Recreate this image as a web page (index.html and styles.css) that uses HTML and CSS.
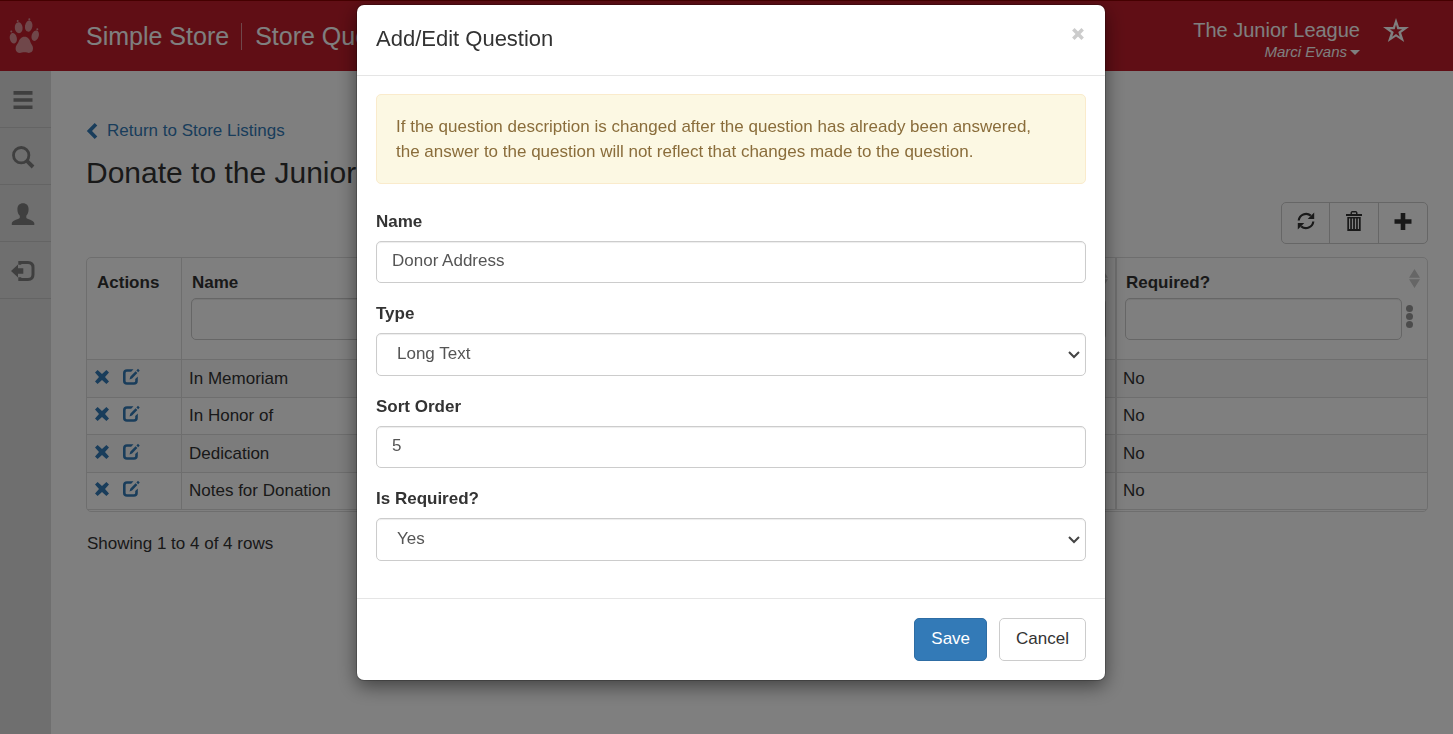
FILE: index.html
```
<!DOCTYPE html>
<html lang="en">
<head>
<meta charset="utf-8">
<title>Store Questions</title>
<link rel="stylesheet" href="styles.css">
</head>
<body>
<svg class="defs" aria-hidden="true">
  <symbol id="i-remove" viewBox="0 0 16 16"><path d="M1 3.600 3.600 1 8 5.100 12.400 1 15 3.600 11 8l4 4.400-2.600 2.600L8 10.900 3.600 15 1 12.400 5 8z"/></symbol>
  <symbol id="i-edit" viewBox="0 0 18 18"><path d="M11.500 1.200H5Q1 1.200 1 5v8q0 3.800 4 3.800h7q3.800 0 3.800-3.800V8.500L13.200 11v2q0 1.300-1.300 1.300H5Q3.600 14.300 3.600 13V5.200q0-1.400 1.400-1.400h4.200z"/><path d="M7.500 11.500 8.400 8.600 13.600 3.200 15.400 5 10.100 10.400zM14.400 2.400 16 .8 17.700 2.600 16.200 4.200z"/></symbol>
  <symbol id="i-sort" viewBox="0 0 11 19"><path d="M5.500 0 11 8.700H0zM5.500 19 11 10.200H0z"/></symbol>
</svg>

<header class="topbar">
  <a class="brand" href="#" aria-label="Home">
    <svg class="paw" viewBox="0 0 30 36" aria-hidden="true">
      <ellipse cx="9.700" cy="9.800" rx="3.900" ry="5.500" transform="rotate(-4 9.700 9.800)"/>
      <ellipse cx="19.700" cy="8.100" rx="3.700" ry="5.600" transform="rotate(10 19.700 8.100)"/>
      <ellipse cx="4.300" cy="20.300" rx="3.500" ry="5.300" transform="rotate(-12 4.300 20.300)"/>
      <ellipse cx="26.200" cy="17.700" rx="3.500" ry="5.400" transform="rotate(18 26.200 17.700)"/>
      <circle cx="8.700" cy="3" r="1"/><circle cx="20.300" cy="1.200" r="1"/><circle cx="2.300" cy="13.600" r="1"/><circle cx="28.300" cy="11.300" r="1"/>
      <path d="M15.500 18.800c3.500 0 5.200 2.700 5.900 5.200.6 2.200 2.800 3.400 2.600 6.800-.2 3.800-3.600 4.600-5.800 3.800-1.800-.6-3.600-.6-5.300 0-2.600.9-6.100.1-6.300-3.600-.2-3.200 2-4.800 2.900-7 1-2.500 2.600-5.200 6-5.200z"/>
    </svg>
  </a>
  <div class="crumbs"><span>Simple Store</span><span class="crumb-page">Store Questions</span></div>
  <div class="account">
    <span class="org">The Junior League</span>
    <button type="button" class="user">Marci Evans<span class="caret"></span></button>
  </div>
  <button type="button" class="star" aria-label="Favorite">
    <svg viewBox="0 0 26 24" aria-hidden="true"><path fill-rule="evenodd" d="M13 0 16 9H26L18.100 14.800 21.200 24 13 18.400 4.800 24 7.900 14.800 0 9H10zM13 6.500 11.700 11.200H6.900L10.700 14 9.200 18.700 13 15.900 16.800 18.700 15.300 14 19.100 11.200H14.300z"/></svg>
  </button>
</header>

<div class="shell">
  <nav class="sidebar" aria-label="Main">
    <a href="#" aria-label="Menu"><svg viewBox="0 0 24 24"><path d="M2.500 3h19v3.700h-19zM2.500 10.200h19v3.600h-19zM2.500 17.400h19V21h-19z"/></svg></a>
    <a href="#" aria-label="Search"><svg viewBox="0 0 24 24"><circle cx="10.200" cy="10.200" r="7.700" fill="none" stroke="currentColor" stroke-width="2.800"/><path d="M14.600 17.200 17.200 14.600 23.400 20.600 20.700 23.400z"/></svg></a>
    <a href="#" aria-label="Profile"><svg viewBox="0 0 24 24"><path d="M12 1.200c3.600 0 5.600 2.300 5.600 6 0 2.900-.8 5-2.300 6.500v2c0 1 7.800 2.800 8 5.300v2H.8v-2c.2-2.500 8-4.300 8-5.300v-2C7.200 12.200 6.400 10.100 6.400 7.200c0-3.700 2-6 5.600-6z"/></svg></a>
    <a href="#" aria-label="Log out"><svg viewBox="0 0 24 24"><path d="M0 12 7 5.500V9.200h5.300v5.600H7v3.700z"/><path d="M8.800 5.800V3.500h8.200q5 0 5 5v7q0 5-5 5H8.800V18.200" fill="none" stroke="currentColor" stroke-width="3"/></svg></a>
  </nav>

  <main class="content">
    <a class="back" href="#"><svg viewBox="0 0 12 16" aria-hidden="true"><path d="M8.700 0 11.300 2.600 6 8l5.300 5.400L8.700 16 .8 8z"/></svg>Return to Store Listings</a>
    <h1>Donate to the Junior League</h1>

    <div class="toolbar">
      <button type="button" aria-label="Refresh"><svg viewBox="0 0 20 20"><path d="M2.700 9.500A7.400 7.400 0 0 1 14.800 4.600M17.300 10.500A7.400 7.400 0 0 1 5.200 15.400" fill="none" stroke="currentColor" stroke-width="2.200"/><path d="M18.200 1.500v6.500h-6.500zM1.800 18.500v-6.500h6.500z"/></svg></button>
      <button type="button" aria-label="Delete"><svg viewBox="0 0 20 20"><path d="M6.500 3V1.500L7.800 0h4.400l1.300 1.500V3H18v2H2V3zM8 3h4V1.600H8z" fill-rule="evenodd"/><path d="M3.300 6h13.400v14H3.300zM5 7.500V18h1.200V7.500zM7.900 7.500V18h1.200V7.500zM10.900 7.500V18h1.200V7.500zM13.800 7.500V18H15V7.500z" fill-rule="evenodd"/></svg></button>
      <button type="button" aria-label="Add"><svg viewBox="0 0 20 20"><path d="M7.700 2h4.600v6.200H18.500v4.600H12.300V19H7.700v-6.200H1.500V8.200h6.200z"/></svg></button>
    </div>

    <div class="grid-box">
      <table class="grid">
        <thead>
          <tr>
            <th class="col-actions" scope="col"><span class="th-title">Actions</span></th>
            <th scope="col"><span class="th-title">Name</span><svg class="sort"><use href="#i-sort"/></svg>
              <input class="filter" type="text" aria-label="Filter by name"></th>
            <th class="col-required" scope="col"><span class="th-title">Required?</span><svg class="sort"><use href="#i-sort"/></svg>
              <div class="filter-row"><input class="filter" type="text" aria-label="Filter by required"><button type="button" class="more" aria-label="More"><i></i><i></i><i></i></button></div></th>
          </tr>
        </thead>
        <tbody>
          <tr><td><span class="acts"><a href="#" aria-label="Remove"><svg class="rm"><use href="#i-remove"/></svg></a><a href="#" aria-label="Edit"><svg class="ed"><use href="#i-edit"/></svg></a></span></td><td>In Memoriam</td><td class="col-required">No</td></tr>
          <tr><td><span class="acts"><a href="#" aria-label="Remove"><svg class="rm"><use href="#i-remove"/></svg></a><a href="#" aria-label="Edit"><svg class="ed"><use href="#i-edit"/></svg></a></span></td><td>In Honor of</td><td class="col-required">No</td></tr>
          <tr><td><span class="acts"><a href="#" aria-label="Remove"><svg class="rm"><use href="#i-remove"/></svg></a><a href="#" aria-label="Edit"><svg class="ed"><use href="#i-edit"/></svg></a></span></td><td>Dedication</td><td class="col-required">No</td></tr>
          <tr><td><span class="acts"><a href="#" aria-label="Remove"><svg class="rm"><use href="#i-remove"/></svg></a><a href="#" aria-label="Edit"><svg class="ed"><use href="#i-edit"/></svg></a></span></td><td>Notes for Donation</td><td class="col-required">No</td></tr>
        </tbody>
      </table>
    </div>
    <p class="summary">Showing 1 to 4 of 4 rows</p>
  </main>
</div>

<div class="backdrop">
  <form class="modal" role="dialog" aria-modal="true" aria-labelledby="modal-title">
    <div class="modal-header">
      <h2 id="modal-title">Add/Edit Question</h2>
      <button type="button" class="close" aria-label="Close"><svg viewBox="0 0 12 12"><path d="M2 2l8 8M10 2l-8 8" stroke="currentColor" stroke-width="3"/></svg></button>
    </div>
    <div class="modal-body">
      <p class="alert">If the question description is changed after the question has already been answered, the answer to the question will not reflect that changes made to the question.</p>
      <div class="field"><label for="q-name">Name</label><input id="q-name" type="text" value="Donor Address"></div>
      <div class="field"><label for="q-type">Type</label><select id="q-type"><option>Long Text</option></select></div>
      <div class="field"><label for="q-sort">Sort Order</label><input id="q-sort" type="text" value="5"></div>
      <div class="field"><label for="q-req">Is Required?</label><select id="q-req"><option>Yes</option></select></div>
    </div>
    <div class="modal-footer">
      <button type="button" class="btn btn-primary">Save</button>
      <button type="button" class="btn">Cancel</button>
    </div>
  </form>
</div>
</body>
</html>
```
FILE: styles.css
```
* { box-sizing: border-box; }

body {
  margin: 0;
  min-height: 100vh;
  display: flex;
  flex-direction: column;
  font-family: "Liberation Sans", Arial, sans-serif;
  font-size: 17px;
  line-height: 25px;
  color: #333;
  background: #fff;
}

button, input, select { font: inherit; color: inherit; }
button { padding: 0; border: 0; background: none; cursor: pointer; }
a { color: #337ab7; text-decoration: none; }
svg { fill: currentColor; display: block; }
.defs { display: none; }

/* Top bar */
.topbar {
  display: flex;
  align-items: center;
  height: 71px;
  padding-right: 44px;
  border-top: 1px solid #8b0000;
  background: #c01d2b;
  color: #fff;
}
.brand { width: 86px; padding-left: 9px; color: rgba(255, 255, 255, 0.5); }
.paw { width: 30px; height: 36px; }
.crumbs { display: flex; font-size: 25px; line-height: 27px; white-space: nowrap; }
.crumb-page { margin-left: 12px; padding-left: 13px; border-left: 1px solid rgba(255, 255, 255, 0.5); }
.account { margin: 8px 0 0 auto; display: flex; flex-direction: column; align-items: flex-end; }
.org { font-size: 20px; line-height: 24px; }
.user { display: flex; align-items: center; gap: 3px; font-size: 15px; line-height: 20px; font-style: italic; }
.caret { border: 5px solid transparent; border-top-color: #fff; border-bottom: 0; }
.star { margin: 0 0 12px 23px; }
.star svg { width: 26px; height: 24px; }

/* Shell */
.shell { flex: 1; display: flex; }
.sidebar { width: 51px; background: #dedede; }
.sidebar a {
  display: flex;
  align-items: center;
  justify-content: center;
  height: 57px;
  padding: 2px 5px 0 0;
  color: #7e7e7e;
  border-bottom: 1px solid #c8c8c8;
}
.sidebar svg { width: 24px; height: 24px; }

.content { flex: 1; min-width: 0; padding: 47px 25px 20px 35px; }
.back { display: inline-flex; align-items: center; gap: 9px; }
.back svg { width: 12px; height: 16px; }
h1 { margin: 10px 0 12px; font-size: 30px; line-height: 34px; font-weight: 400; }

.toolbar {
  display: flex;
  width: max-content;
  margin: 0 0 13px auto;
  border: 1px solid #ccc;
  border-radius: 5px;
}
.toolbar button { width: 49px; height: 40px; display: grid; place-items: center; }
.toolbar button:first-child { width: 47px; }
.toolbar button + button { border-left: 1px solid #ccc; }
.toolbar svg { width: 20px; height: 20px; margin-bottom: 4px; }

/* Grid */
.grid-box { padding-bottom: 1px; border: 1px solid #ddd; border-radius: 5px; }
.grid { width: 100%; border-spacing: 0; table-layout: fixed; }
.grid th, .grid td { padding: 0 7px; text-align: left; border-bottom: 1px solid #ddd; }
.grid th + th, .grid td + td { border-left: 1px solid #ddd; }
.grid th + .col-required, .grid td + .col-required { width: 312px; padding-left: 6px; border-left: 2px solid #ddd; }
.grid th { position: relative; height: 102px; padding: 12px 9px 0; vertical-align: top; }
.grid th + .col-required { padding-left: 8px; }
.grid .col-actions { width: 94px; }
.grid tbody tr { height: 38px; }
.grid tbody tr:nth-child(even) { height: 37px; }
.grid tbody tr:nth-child(odd) { background: #f9f9f9; }
.th-title { display: block; margin-bottom: 3px; padding-left: 1px; }
.sort { position: absolute; top: 11px; right: 7px; width: 11px; height: 19px; color: #ccc; }
.filter {
  flex: 1;
  width: 100%;
  min-width: 0;
  height: 42px;
  padding: 0 15px;
  border: 1px solid #ccc;
  border-radius: 5px;
  background: #fff;
  box-shadow: inset 0 1px 1px rgba(0, 0, 0, 0.075);
}
.filter-row { display: flex; align-items: center; gap: 4px; margin-right: 5px; }
.more { display: grid; gap: 1px; padding-bottom: 4px; }
.more i { width: 7px; height: 7px; border-radius: 50%; background: #999; }
.acts { display: flex; align-items: center; gap: 12px; padding-bottom: 3px; }
.rm { width: 16px; height: 16px; }
.ed { width: 18px; height: 18px; }
.summary { margin: 19px 0 0 1px; }

/* Modal */
.backdrop {
  position: fixed;
  inset: 0;
  display: flex;
  justify-content: center;
  align-items: flex-start;
  padding: 5px 0 0 9px;
  background: rgba(0, 0, 0, 0.5);
  overflow: hidden;
}
.modal {
  width: 748px;
  max-width: 100%;
  border-radius: 7px;
  background: #fff;
  box-shadow: 0 0 0 1px rgba(0, 0, 0, 0.2), 0 6px 19px rgba(0, 0, 0, 0.5);
}
.modal-header {
  display: flex;
  align-items: flex-start;
  justify-content: space-between;
  padding: 19px 19px 21px;
  border-bottom: 1px solid #e5e5e5;
}
h2 { margin: 0; font-size: 22px; line-height: 30px; font-weight: 400; }
.close { margin: 3px 1px 0 0; color: #ccc; }
.close svg { width: 14px; height: 14px; }
.modal-body { padding: 18px 19px 19px; }
.alert {
  margin: 0 0 25px;
  padding: 19px 38px 19px 19px;
  color: #8a6d3b;
  background: #fcf8e3;
  border: 1px solid #faebcc;
  border-radius: 5px;
}
.field { display: flex; flex-direction: column; gap: 7px; margin-bottom: 18px; }
.field label { font-weight: 700; }
.field input, .field select {
  width: 100%;
  height: 42px;
  padding: 0 15px 2px;
  color: #555;
  background: #fff;
  border: 1px solid #ccc;
  border-radius: 5px;
  box-shadow: inset 0 1px 1px rgba(0, 0, 0, 0.075);
}
.field select {
  appearance: none;
  height: 43px;
  padding: 0 24px 2px 20px;
  background: #fff url("data:image/svg+xml,%3Csvg xmlns='http://www.w3.org/2000/svg' viewBox='0 0 12 8'%3E%3Cpath d='M1 1l5 5 5-5' fill='none' stroke='%23444' stroke-width='2'/%3E%3C/svg%3E") no-repeat right 5px center / 12px 8px;
}
.modal-footer {
  display: flex;
  justify-content: flex-end;
  gap: 12px;
  padding: 19px;
  border-top: 1px solid #e5e5e5;
}
.btn { height: 43px; padding: 0 16px 2px; border: 1px solid #ccc; border-radius: 5px; background: #fff; }
.btn-primary { color: #fff; background: #337ab7; border-color: #2e6da4; }
```
